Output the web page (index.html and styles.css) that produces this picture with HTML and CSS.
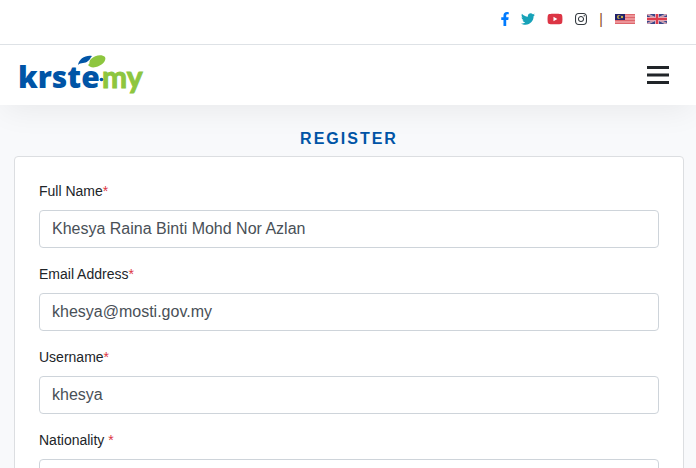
FILE: index.html
```
<!DOCTYPE html>
<html lang="en">
<head>
  <meta charset="UTF-8">
  <meta name="viewport" content="width=device-width, initial-scale=1.0">
  <title>Register</title>
  <link rel="stylesheet" href="styles.css">
</head>
<body>

<!-- Top bar -->
<div class="topbar">
  <a class="facebook" href="#" aria-label="Facebook">
    <svg class="icon" width="8" height="14" viewBox="16 0 288 512"><path d="M279.14 288l14.22-92.66h-88.91v-60.13c0-25.35 12.42-50.06 52.24-50.06h40.42V6.26S260.43 0 225.36 0c-73.22 0-121.08 44.38-121.08 124.72v70.62H22.89V288h81.39v224h100.17V288z"/></svg>
  </a>
  <a class="twitter" href="#" aria-label="Twitter">
    <svg class="icon" width="14" height="14" viewBox="0 0 512 512"><path d="M459.37 151.716c.325 4.548.325 9.097.325 13.645 0 138.72-105.583 298.558-298.558 298.558-59.452 0-114.68-17.219-161.137-47.106 8.447.974 16.568 1.299 25.34 1.299 49.055 0 94.213-16.568 130.274-44.832-46.132-.975-84.792-31.188-98.112-72.772 6.498.974 12.995 1.624 19.818 1.624 9.421 0 18.843-1.3 27.614-3.573-48.081-9.747-84.143-51.98-84.143-102.985v-1.299c13.969 7.797 30.214 12.67 47.431 13.319-28.264-18.843-46.781-51.005-46.781-87.391 0-19.492 5.197-37.36 14.294-52.954 51.655 63.675 129.3 105.258 216.365 109.807-1.624-7.797-2.599-15.918-2.599-24.04 0-57.828 46.782-104.934 104.934-104.934 30.213 0 57.502 12.67 76.67 33.137 23.715-4.548 46.456-13.32 66.599-25.34-7.798 24.366-24.366 44.833-46.132 57.827 21.117-2.273 41.584-8.122 60.426-16.243-14.292 20.791-32.161 39.308-52.628 54.253z"/></svg>
  </a>
  <a class="youtube" href="#" aria-label="YouTube">
    <svg class="icon" width="16" height="14" viewBox="0 0 576 512"><path d="M549.655 124.083c-6.281-23.65-24.787-42.276-48.284-48.597C458.781 64 288 64 288 64S117.22 64 74.629 75.486c-23.497 6.322-42.003 24.947-48.284 48.597-11.412 42.867-11.412 132.305-11.412 132.305s0 89.438 11.412 132.305c6.281 23.65 24.787 41.5 48.284 47.821C117.22 448 288 448 288 448s170.78 0 213.371-11.486c23.497-6.321 42.003-24.171 48.284-47.821 11.412-42.867 11.412-132.305 11.412-132.305s0-89.438-11.412-132.305zm-317.51 213.508V175.185l142.739 81.205-142.739 81.201z"/></svg>
  </a>
  <a class="instagram" href="#" aria-label="Instagram">
    <svg class="icon" width="12" height="14" viewBox="0 0 448 512"><path d="M224.1 141c-63.6 0-114.9 51.3-114.9 114.9s51.3 114.9 114.9 114.9S339 319.5 339 255.9 287.7 141 224.1 141zm0 189.6c-41.1 0-74.7-33.5-74.7-74.7s33.5-74.7 74.7-74.7 74.7 33.5 74.7 74.7-33.6 74.7-74.7 74.7zm146.4-194.3c0 14.9-12 26.8-26.8 26.8-14.9 0-26.8-12-26.8-26.8s12-26.8 26.8-26.8 26.8 12 26.8 26.8zm76.1 27.2c-1.7-35.9-9.9-67.7-36.2-93.9-26.2-26.2-58-34.4-93.9-36.2-37-2.1-147.9-2.1-184.9 0-35.8 1.7-67.6 9.9-93.9 36.1s-34.4 58-36.2 93.9c-2.1 37-2.1 147.9 0 184.9 1.7 35.9 9.9 67.7 36.2 93.9s58 34.4 93.9 36.2c37 2.1 147.9 2.1 184.9 0 35.9-1.7 67.7-9.9 93.9-36.2 26.2-26.2 34.4-58 36.2-93.9 2.1-37 2.1-147.8 0-184.8zM398.8 388c-7.8 19.6-22.9 34.7-42.6 42.6-29.5 11.7-99.5 9-132.1 9s-102.7 2.6-132.1-9c-19.6-7.8-34.7-22.9-42.6-42.6-11.7-29.5-9-99.5-9-132.1s-2.6-102.7 9-132.1c7.8-19.6 22.9-34.7 42.6-42.6 29.5-11.7 99.5-9 132.1-9s102.7-2.6 132.1 9c19.6 7.8 34.7 22.9 42.6 42.6 11.7 29.5 9 99.5 9 132.1s2.7 102.7-9 132.1z"/></svg>
  </a>
  <span class="divider">|</span>
  <a href="#" aria-label="Bahasa Melayu">
    <svg class="flag" width="20" height="10" viewBox="0 0 20 10">
      <rect width="20" height="10" fill="#ec9498"/>
      <path d="M0 .5h20M0 3.5h20M0 6.5h20M0 9.5h20" stroke="#dd666c"/>
      <rect width="10" height="6" fill="#20206b"/>
      <circle cx="4" cy="3" r="2" fill="#c9b548"/>
      <circle cx="5" cy="3" r="1.5" fill="#20206b"/>
      <circle cx="7" cy="3" r="1.2" fill="#c9b548"/>
    </svg>
  </a>
  <a href="#" aria-label="English">
    <svg class="flag" width="20" height="10" viewBox="0 0 20 10">
      <rect width="20" height="10" fill="#3b4688"/>
      <path d="M0 0l20 10M20 0L0 10" stroke="#c3bdd2" stroke-width="2"/>
      <path d="M0 0l20 10M20 0L0 10" stroke="#d8747f" stroke-width=".7"/>
      <path d="M10 0v10M0 5h20" stroke="#e5a5b2" stroke-width="4"/>
      <path d="M10 0v10M0 5h20" stroke="#dc3c4c" stroke-width="2"/>
    </svg>
  </a>
</div>

<!-- Header -->
<header class="navbar">
  <a class="brand" href="#" aria-label="krste.my">
    <svg width="128" height="44" viewBox="0 0 128 44">
      <text class="brand-blue" x="-1" y="35">krste</text>
      <text class="brand-green" x="83" y="35">my</text>
      <circle cx="82.5" cy="26.5" r="1.8" fill="#0054a6"/>
      <path d="M59 12C60 6 66 2 73 3C71 5 71 7 69 8C66 11 62 9 59 12z" fill="#0054a6"/>
      <path d="M69 12C72 10 69 9 72 6C76 2 83 1 86 4C88 8 82 13 77 14C73 15 71 14 69 12z" fill="#8dc63f"/>
    </svg>
  </a>
  <button class="menu-btn" type="button" aria-label="Menu">
    <svg width="22" height="20" viewBox="0 0 22 20"><path d="M0 2.5h22M0 10h22M0 17.5h22" stroke="#212529" stroke-width="3"/></svg>
  </button>
</header>

<!-- Register form -->
<main class="container">
  <h1 class="title">REGISTER</h1>
  <form class="card">
    <div class="form-group">
      <label for="fullname">Full Name<span class="required">*</span></label>
      <input class="form-control" type="text" id="fullname" name="fullname" value="Khesya Raina Binti Mohd Nor Azlan">
    </div>
    <div class="form-group">
      <label for="email">Email Address<span class="required">*</span></label>
      <input class="form-control" type="email" id="email" name="email" value="khesya@mosti.gov.my">
    </div>
    <div class="form-group">
      <label for="username">Username<span class="required">*</span></label>
      <input class="form-control" type="text" id="username" name="username" value="khesya">
    </div>
    <div class="form-group">
      <label for="nationality">Nationality <span class="required">*</span></label>
      <select class="form-control" id="nationality" name="nationality"></select>
    </div>
  </form>
</main>

</body>
</html>
```
FILE: styles.css
```
* {
  box-sizing: border-box;
}

body {
  margin: 0;
  font-family: "Liberation Sans", Arial, sans-serif;
  font-size: 14px;
  line-height: 21px;
  color: #212529;
  background-color: #f8f9fb;
}

a {
  display: flex;
  text-decoration: none;
}

.topbar {
  display: flex;
  justify-content: flex-end;
  align-items: center;
  gap: 12px;
  height: 45px;
  padding: 0 29px 6px 16px;
  background-color: #fff;
  border-bottom: 1px solid #dee2e6;
}

.icon {
  fill: currentColor;
}

.facebook {
  color: #007bff;
}

.twitter {
  color: #17a2b8;
}

.youtube {
  color: #dc3545;
}

.instagram {
  color: #343a40;
}

.divider {
  color: #8a4b1c;
}

.navbar {
  display: flex;
  justify-content: space-between;
  align-items: center;
  height: 60px;
  padding: 0 27px 0 19px;
  background-color: #fff;
  box-shadow: 0 8px 32px -4px rgba(0, 0, 0, 0.07);
  clip-path: inset(0 0 -48px 0);
}

.brand-blue {
  font: 800 30px "Open Sans", sans-serif;
  fill: #0054a6;
}

.brand-green {
  font: 700 30px Lato, sans-serif;
  fill: #8dc63f;
  stroke: #8dc63f;
  stroke-width: 1px;
}

.menu-btn {
  display: flex;
  padding: 0;
  border: none;
  background: none;
  cursor: pointer;
}

.container {
  padding: 24px 12px 24px 14px;
}

.title {
  margin: 0 0 8px;
  font-size: 16px;
  line-height: 19px;
  letter-spacing: 2px;
  text-align: center;
  color: #0054a6;
}

.card {
  padding: 24px;
  background-color: #fff;
  border: 1px solid #dcdee1;
  border-radius: 4px;
}

.form-group {
  margin-bottom: 16px;
}

.form-group label {
  display: block;
  margin-bottom: 8px;
}

.required {
  color: #dc3545;
}

.form-control {
  display: block;
  width: 100%;
  height: 38px;
  padding: 6px 12px;
  font-family: inherit;
  font-size: 16px;
  line-height: 24px;
  color: #495057;
  background-color: #fff;
  border: 1px solid #ced4da;
  border-radius: 4px;
  appearance: none;
}
```
